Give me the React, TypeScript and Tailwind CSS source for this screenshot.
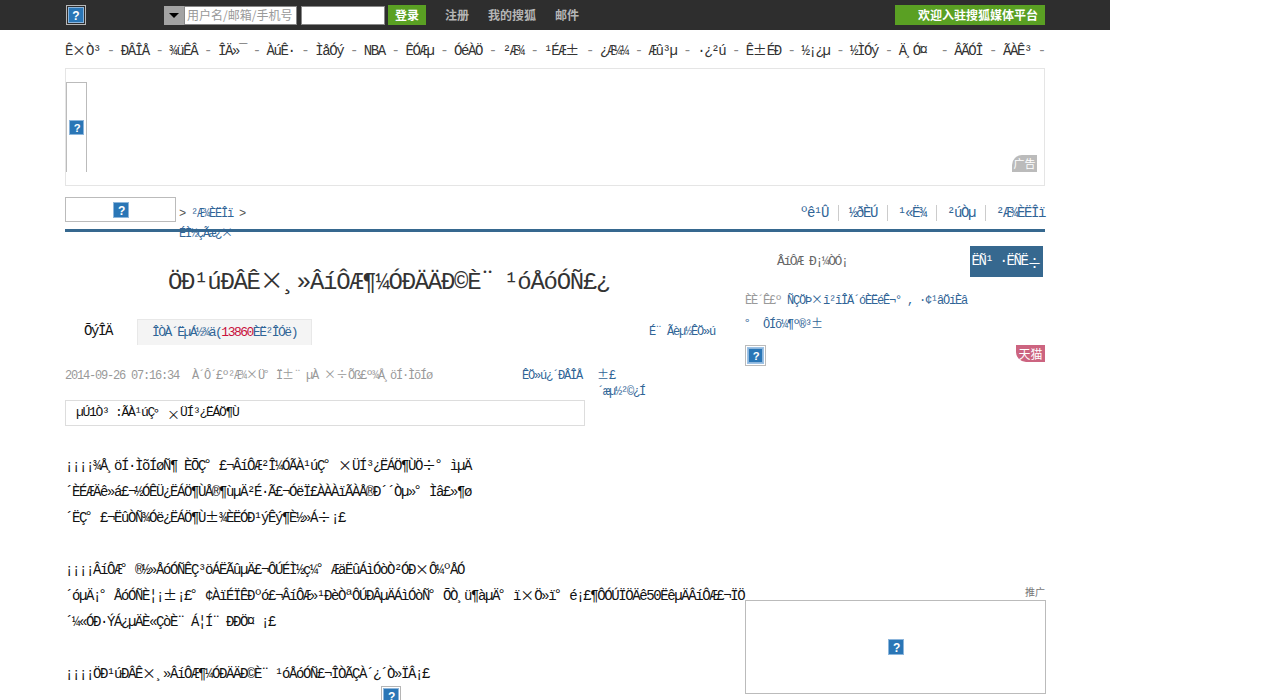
const mono = "font-['Liberation_Mono','DejaVu_Sans_Mono',monospace] tracking-[-1.4px]";
const cjk = "font-['Noto_Sans_CJK_SC','Liberation_Sans',sans-serif]";

const navItems = ['Ê×Ò³', 'ÐÂÎÅ', '¾üÊÂ', 'ÎÄ»¯', 'ÀúÊ·', 'ÌåÓý', 'NBA', 'ÊÓÆµ', 'ÓéÀÖ', '²Æ¾', '¹ÉÆ±', '¿Æ¼¼', 'Æû³µ', '·¿²ú', 'Ê±ÉÐ', '½¡¿µ', '½ÌÓý', 'Ä¸Ó¤', 'ÂÃÓÎ', 'ÃÀÊ³'];
const channelLinks = ['ºê¹Û', '½ðÈÚ', '¹«Ë¾', '²úÒµ', '²Æ¾ÈËÎï'];

const article = [
  ['¡¡¡¡¾Å¸öÍ·ÌõÍøÑ¶ ÈÕÇ°£¬ÂíÔÆ²Î¼ÓÃÀ¹úÇ°×ÜÍ³¿ËÁÖ¶ÙÖ÷°ìµÄ', '´ÈÉÆÄê»á£¬½ÓÊÜ¿ËÁÖ¶ÙÅ®¶ùµÄ²É·Ã£¬ÓëÏ£ÀÀÀïÃÀÅ®Ð´´Òµ»°Ìâ£»¶ø', '´ËÇ°£¬ËûÒÑ¾Óë¿ËÁÖ¶Ù±¾ÈËÓÐ¹ýÊý¶È½»Á÷¡£'],
  ['¡¡¡¡ÂíÔÆ°®½»ÅóÓÑÊÇ³öÁËÃûµÄ£¬ÔÚÉÌ½ç¼°ÆäËûÁìÓòÒ²ÓÐ×Ô¼ºÅÓ', '´óµÄ¡°ÅóÓÑÈ¦¡±¡£°¢ÀïÉÏÊÐºó£¬ÂíÔÆ»¹ÐèÒªÔÚÐÂµÄÁìÓòÑ°ÕÒ¸ü¶àµÄ°ï×Ö»ï°é¡£¶ÔÓÚÏÖÄê50ËêµÄÂíÔÆ£¬ÏÖ', '´¼«ÓÐ·ÝÁ¿µÄÈ«ÇòÈ¨Á¦Í¨ÐÐÖ¤¡£'],
  ['¡¡¡¡ÖÐ¹úÐÂÊ×¸»ÂíÔÆ¶¼ÓÐÄÄÐ©È¨¹óÅóÓÑ£¬ÎÒÃÇÀ´¿´Ò»ÏÂ¡£'],
];

// these latin-1 bytes fall back to a full width glyph in the original page
function M({ children }: { children: string }) {
  return (
    <>
      {children.split(/([×±¨°÷¤§])/).map((part, i) =>
        i % 2 ? (
          <span key={i} className={`inline-block w-[1em] text-left leading-none tracking-normal ${cjk}`}>
            {part}
          </span>
        ) : (
          part
        ),
      )}
    </>
  );
}

function Broken({ framed = false, size = 16 }: { framed?: boolean; size?: number }) {
  const icon = (
    <svg width={size} height={size} viewBox="0 0 16 16" className="block">
      <rect x="0.5" y="0.5" width="15" height="15" fill="#2a76b6" stroke="#8db6dc" />
      <text x="8" y="12.5" textAnchor="middle" fontSize="12" fontWeight="700" fill="#fff" fontFamily="Liberation Sans">
        ?
      </text>
    </svg>
  );
  if (!framed) return icon;
  return <div className="border border-[#b5b5b5] bg-white p-[1px]">{icon}</div>;
}

export default function App() {
  return (
    <div className="h-[700px] w-[1280px] overflow-hidden bg-white text-[14px] text-[#111]">
      <div className="h-[30px] w-[1110px] bg-[#2e2e2e]">
        <div className={`mx-[65px] flex h-full items-center ${cjk}`}>
          <div className="ml-[1px] w-[98px]">
            <div className="w-fit border border-[#b8b8b8] p-[1px]">
              <Broken />
            </div>
          </div>
          <div className="flex h-[19px] w-[20px] items-center justify-center bg-[#a3a3a3]">
            <div className="h-0 w-0 border-x-[5px] border-t-[5px] border-x-transparent border-t-black" />
          </div>
          <div className="flex h-[19px] w-[113px] items-center border border-[#888] bg-white pl-[2px] text-[12px] text-[#999]">用户名/邮箱/手机号</div>
          <div className="ml-[4px] h-[19px] w-[84px] border border-[#888] bg-white" />
          <div className="ml-[3px] flex h-[20px] w-[38px] items-center justify-center bg-[#5aa023] text-[12px] font-bold text-white">登录</div>
          <div className="ml-[19px] flex gap-[19px] text-[12px] font-bold text-[#b5b5b5]">
            <span>注册</span>
            <span>我的搜狐</span>
            <span>邮件</span>
          </div>
          <div className="ml-auto flex h-[20px] w-[150px] items-center justify-end bg-[#5aa023] pr-[7px] text-[12px] font-bold text-white">欢迎入驻搜狐媒体平台</div>
        </div>
      </div>

      <div className={`mx-[65px] w-[980px] ${mono}`}>
        <nav className="flex h-[38px] items-center justify-between pt-[4px] text-[14px] text-[#333]">
          {navItems.map((item) => (
            <div key={item} className="contents">
              <span>
                <M>{item}</M>
              </span>
              <span className="text-[#888]">-</span>
            </div>
          ))}
        </nav>

        <div className="relative h-[118px] border border-[#e5e5e5]">
          <div className="mt-[13px] flex h-[90px] w-[21px] items-start justify-center border-x border-t border-[#bbb] pt-[37px]">
            <Broken size={15} />
          </div>
          <div className={`absolute right-[7px] bottom-[13px] flex h-[17px] w-[25px] items-center justify-center rounded-tl-[10px] bg-[#bbb] text-[11px] tracking-normal text-white ${cjk}`}>广告</div>
        </div>

        <div className="mt-[11px] flex h-[35px] items-start border-b-[3px] border-[#36688f]">
          <div className="flex h-[25px] w-[111px] items-center justify-center border border-[#bbb]">
            <Broken />
          </div>
          <div className="mt-[7px] ml-[3px] w-[70px] text-[12px] leading-[20px] tracking-[-1.2px] text-[#2f6496]">
            <span className="text-[#555]">&gt;</span> ²Æ¾ÈËÎï <span className="text-[#555]">&gt;</span>
            <div>
              <M>ÉÌ½çÃæ¿×</M>
            </div>
          </div>
          <div className="ml-auto flex pt-[8px] text-[14px] leading-[16px] text-[#2f6496]">
            {channelLinks.map((link, i) => (
              <span key={link} className={i ? 'ml-[10px] border-l border-[#ccc] pl-[10px]' : ''}>
                <M>{link}</M>
              </span>
            ))}
          </div>
        </div>

        <div className="flex">
          <main className="w-[680px] shrink-0">
            <h1 className="mt-[35px] ml-[103px] text-[24px] leading-[32px] font-normal tracking-[-1.3px] whitespace-nowrap text-[#333]">
              <M>ÖÐ¹úÐÂÊ×¸»ÂíÔÆ¶¼ÓÐÄÄÐ©È¨¹óÅóÓÑ£¿</M>
            </h1>

            <div className="mt-[20px] flex h-[26px] items-end">
              <span className="ml-[19px] w-[53px] pb-[3px]">ÕýÎÄ</span>
              <div className="flex h-[26px] w-[175px] items-center justify-center border-x border-t border-[#e8e8e8] bg-[#f4f4f4] text-[13px] tracking-[-1.5px] text-[#2f6496]">
                ÎÒÀ´ËµÁ½¾ä(<span className="text-[#c8103c]">13860</span>ÈË²ÎÓë)
              </div>
              <span className="ml-[337px] pb-[4px] text-[12px] tracking-[-1.2px] text-[#2f6496]">
                <M>É¨Ãèµ½ÊÖ»ú</M>
              </span>
            </div>

            <div className="mt-[21px] flex h-[34px] text-[12px] leading-[20px] tracking-[-1.2px]">
              <span className="w-[457px] whitespace-nowrap text-[#999]">
                2014-09-26 07:16:34 <span className="ml-[7px]" />
                <M>À´Ô´£º²Æ¾×Ü°Ï±¨µÀ ×÷Õß£º¾Å¸öÍ·ÌõÍø</M>
              </span>
              <span className="w-[75px] text-[#2f6496]">ÊÖ»ú¿´ÐÂÎÅ</span>
              <div className="leading-[16px] text-[#2f6496]">
                <p className="pt-[2px]">
                  <M>±£</M>
                </p>
                <p>´æµ½²©¿Í</p>
              </div>
            </div>

            <div className="flex h-[26px] w-[520px] items-center border border-[#ddd] pl-[10px] text-[13px] tracking-[-1.3px]">
              <M>µÚ1Ò³ :ÃÀ¹úÇ° ×ÜÍ³¿ËÁÖ¶Ù</M>
            </div>

            <article className="mt-[27px] flex flex-col gap-[26px]">
              {article.map((paragraph) => (
                <div key={paragraph[0]}>
                  {paragraph.map((line) => (
                    <p key={line} className="h-[26px] leading-[26px] whitespace-nowrap">
                      <M>{line}</M>
                    </p>
                  ))}
                </div>
              ))}
            </article>

            <div className="-mt-[1px] ml-[316px] w-fit">
              <Broken framed />
            </div>
          </main>

          <aside className="w-[300px] shrink-0">
            <div className="mt-[14px] flex h-[31px] items-center justify-between pr-[2px] pl-[32px] text-[13px] text-[#666]">
              <span>ÂíÔÆ Ð¡¼ÒÓ¡</span>
              <div className="flex h-[31px] w-[73px] items-center justify-center bg-[#36688f] text-[14px] whitespace-nowrap text-white">
                <M>ËÑ¹ ·ËÑË÷</M>
              </div>
            </div>

            <div className="mt-[12px] text-[12px] leading-[24px] tracking-[-1.2px] text-[#2f6496]">
              <p>
                <span className="text-[#999]">ÈÈ´Ê£º</span> ÑÇÖÞ<M>×î</M>²îÎÄ´óÈËéÊ¬° , ·¢¹âÖíÈâ
              </p>
              <p>
                <M>° ÔÍõ¼¶º®³±</M>
              </p>
            </div>

            <div className="relative mt-[8px] h-[21px]">
              <div className="w-fit border border-[#bbb] p-[1px]">
                <div className="border border-[#9ec3e6]">
                  <Broken size={15} />
                </div>
              </div>
              <div className={`absolute top-0 right-0 flex h-[17px] w-[29px] items-center justify-center rounded-bl-[10px] bg-[#cc6480] text-[12px] tracking-normal text-white ${cjk}`}>天猫</div>
            </div>

            <div className={`mt-[217px] flex h-[17px] items-center justify-end text-[10px] tracking-normal text-[#777] ${cjk}`}>推广</div>
            <div className="flex h-[94px] w-[301px] items-center justify-center border border-[#bbb]">
              <Broken />
            </div>
          </aside>
        </div>
      </div>
    </div>
  );
}
